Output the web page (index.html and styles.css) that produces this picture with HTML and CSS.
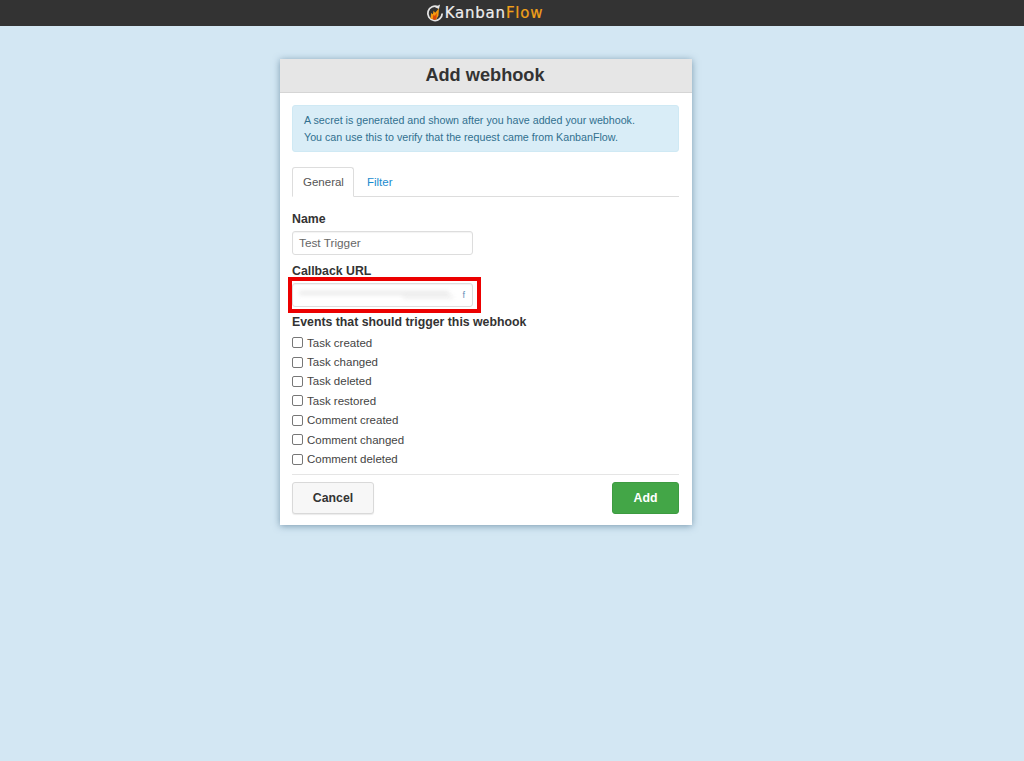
FILE: index.html
```html
<!DOCTYPE html>
<html lang="en">
<head>
<meta charset="utf-8">
<title>Add webhook - KanbanFlow</title>
<link rel="stylesheet" href="styles.css">
</head>
<body>
<header class="topbar">
  <div class="logo">
    <svg class="logo-icon" viewBox="0 0 20 20" width="18" height="18" aria-hidden="true">
      <path d="M13.5 3.2A8 8 0 1 0 18 10.5" fill="none" stroke="#e4e4e4" stroke-width="2"/>
      <path d="M10 3.6 15.6.6l-1.2 5z" fill="#e4e4e4"/>
      <path d="M5 16.5l.6-6.5 2 1.4.8-4 1.8 2.4 4.3-5-.7 8.2-2.6 4.6z" fill="#f59a0e"/>
      <path d="M7.4 17l.9-5 1.6 1.4 2-3.6-.2 5.4-1.6 2.6z" fill="#d8470b"/>
    </svg>
    <span class="logo-text">Kanban<span class="logo-accent">Flow</span></span>
  </div>
</header>
<main class="page">
  <section class="dialog">
    <h1 class="dialog-title">Add webhook</h1>
    <div class="dialog-body">
      <div class="alert">
        A secret is generated and shown after you have added your webhook.<br>
        You can use this to verify that the request came from KanbanFlow.
      </div>
      <nav class="tabs">
        <a class="tab tab-active">General</a>
        <a class="tab">Filter</a>
      </nav>
      <form class="form">
        <label class="field-label">Name</label>
        <div class="input name-input">Test Trigger</div>
        <label class="field-label callback-label">Callback URL</label>
        <div class="callback-wrap">
          <div class="input url-input">
            <span class="smear smear-a"></span>
            <span class="smear smear-b"></span>
            <span class="url-end">f</span>
          </div>
          <div class="highlight"></div>
        </div>
        <div class="field-label events-label">Events that should trigger this webhook</div>
        <ul class="checks">
          <li class="check"><span class="box"></span>Task created</li>
          <li class="check"><span class="box"></span>Task changed</li>
          <li class="check"><span class="box"></span>Task deleted</li>
          <li class="check"><span class="box"></span>Task restored</li>
          <li class="check"><span class="box"></span>Comment created</li>
          <li class="check"><span class="box"></span>Comment changed</li>
          <li class="check"><span class="box"></span>Comment deleted</li>
        </ul>
        <div class="actions">
          <button type="button" class="btn btn-cancel">Cancel</button>
          <button type="button" class="btn btn-add">Add</button>
        </div>
      </form>
    </div>
  </section>
</main>
</body>
</html>
```
FILE: styles.css
```css
* { box-sizing: border-box; }
html, body { margin: 0; height: 100%; }
body {
  background: #d3e7f3;
  font-family: "Liberation Sans", Arial, sans-serif;
  font-size: 11.5px;
  color: #333;
  overflow: hidden;
}
.topbar {
  height: 26px;
  padding-right: 55px;
  background: #333;
  display: flex;
  justify-content: center;
  align-items: center;
}
.logo { display: flex; align-items: center; gap: 1px; margin-top: -1px; }
.logo-text {
  font-family: "DejaVu Sans", sans-serif;
  font-size: 15px;
  letter-spacing: .8px;
  color: #eee;
  -webkit-text-stroke: .2px currentColor;
}
.logo-accent { color: #f0a11a; }
.page { display: flex; justify-content: center; padding: 33px 52px 0 0; }
.dialog {
  width: 412px;
  height: 466px;
  background: #fff;
  box-shadow: 0 1px 7px rgba(50, 90, 120, .55);
}
.dialog-title {
  margin: 0;
  height: 34px;
  padding-right: 2px;
  background: #e6e6e6;
  border-bottom: 1px solid #d5d5d5;
  text-align: center;
  font-size: 18.2px;
  line-height: 33px;
  font-weight: bold;
  color: #333;
}
.dialog-body { padding: 12px 13px 0 12px; }
.alert {
  height: 47px;
  padding: 6px 11px;
  background: #d9edf7;
  border: 1px solid #cfe9f4;
  border-radius: 3px;
  color: #31708f;
  font-size: 10.7px;
  line-height: 17px;
}
.tabs {
  display: flex;
  height: 30px;
  margin-top: 15px;
  border-bottom: 1px solid #ddd;
}
.tab {
  padding: 0 10px;
  line-height: 29px;
  color: #1b8ccf;
  border: 1px solid transparent;
  margin-bottom: -1px;
}
.tab-active {
  padding-right: 9px;
  color: #555;
  background: #fff;
  border: 1px solid #ddd;
  border-bottom-color: #fff;
  border-radius: 3px 3px 0 0;
  margin-right: 2px;
}
.form { display: block; padding-top: 15px; }
.field-label {
  display: block;
  font-weight: bold;
  font-size: 12.3px;
  line-height: 14px;
  color: #333;
}
.input {
  width: 181px;
  height: 24px;
  border: 1px solid #ddd;
  border-radius: 3px;
  box-shadow: inset 0 1px 1px rgba(0, 0, 0, .05);
  background: #fff;
  color: #666;
  font-size: 11.8px;
  padding: 0 6px;
  line-height: 22px;
}
.name-input { margin-top: 5px; }
.callback-label { margin-top: 9px; }
.callback-wrap { position: relative; margin-top: 5px; width: 181px; }
.url-input { position: relative; overflow: hidden; }
.smear {
  position: absolute;
  background: #dcdcdc;
  filter: blur(2px);
}
.smear-a { left: 6px; top: 7px; width: 150px; height: 4px; opacity: .6; }
.smear-b { left: 110px; top: 11px; width: 50px; height: 4px; opacity: .4; }
.url-end {
  position: absolute;
  right: 7px;
  top: 0;
  font-size: 9px;
  color: #5f8db5;
}
.highlight {
  position: absolute;
  left: -4px;
  top: -6px;
  width: 193px;
  height: 36px;
  border: 4px solid #ec0000;
}
.events-label { margin-top: 8px; }
.checks { list-style: none; margin: 4px 0 0; padding: 0; }
.check {
  display: flex;
  align-items: center;
  height: 19.4px;
  color: #444;
}
.box {
  width: 11px;
  height: 11px;
  margin-right: 4px;
  border: 1px solid #777;
  border-radius: 2px;
  background: #fff;
}
.actions {
  display: flex;
  justify-content: space-between;
  margin-top: 5px;
  padding-top: 7px;
  border-top: 1px solid #e5e5e5;
}
.btn {
  height: 32px;
  border-radius: 3px;
  font-family: inherit;
  font-size: 12.3px;
  font-weight: bold;
  padding: 0;
}
.btn-cancel {
  width: 82px;
  background: #f7f7f7;
  border: 1px solid #d9d9d9;
  color: #333;
  box-shadow: 0 1px 1px rgba(0, 0, 0, .08);
}
.btn-add {
  width: 67px;
  background: #43a647;
  border: 1px solid #3d9b41;
  color: #fff;
}
```
